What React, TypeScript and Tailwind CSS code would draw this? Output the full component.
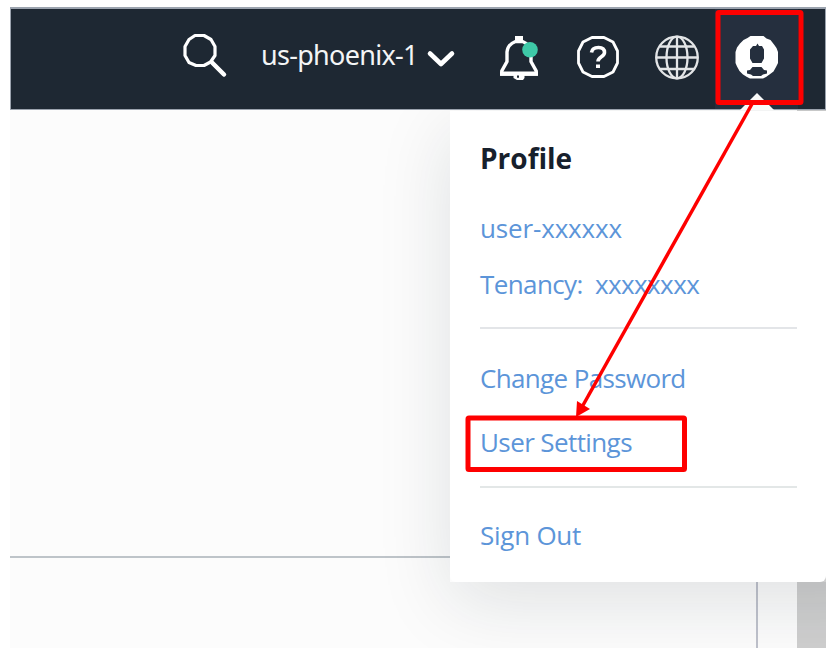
import React from 'react';

function SearchIcon() {
  return (
    <svg className="mb-[5px] ml-[171px] h-[46px] w-[46px] shrink-0" viewBox="0 0 46 46" fill="none" stroke="#fff">
      <path d="M13 3.500h9L29 7.500l4 7v9l-4.500 6.500-6.500 3.500h-8L7 30.500l-4-7v-9L7 7.500Z" strokeWidth="3.200" strokeLinejoin="round" />
      <path d="m30.500 31 11.500 11.500" strokeWidth="4.500" strokeLinecap="round" />
    </svg>
  );
}

function ChevronIcon() {
  return (
    <svg className="mt-[2px] h-[20px] w-[30px] shrink-0" viewBox="0 0 30 20" fill="none" stroke="#fff" strokeWidth="4.600" strokeLinecap="round" strokeLinejoin="round">
      <path d="m4 5.500 11 10.500L26 5.500" />
    </svg>
  );
}

function BellIcon() {
  return (
    <svg className="ml-[43px] mt-[2px] h-[46px] w-[40px] shrink-0" viewBox="0 0 40 46" fill="none">
      <path d="M16 1h8v6h-8Z" fill="#fff" />
      <path d="M16.500 6.500c-5 2-8 5-8.500 10.500v9.500L2.800 36v3h34.400v-3L32 26.500V17c-.5-5.500-3.500-8.500-8.500-10.500Z" stroke="#fff" strokeWidth="3.400" />
      <path d="M1 36.500h38v4.300H1Z" fill="#fff" />
      <path d="M14.500 40h11v3l-1.500 2h-6l-3.500-2Z" fill="#fff" />
      <path d="M18 40.500h2v2.200h-2Z" fill="#1e2833" />
      <circle cx="31" cy="14.800" r="7.800" fill="#3ec9a7" />
    </svg>
  );
}

function HelpIcon() {
  return (
    <svg className="ml-[37px] h-[44px] w-[44px] shrink-0" viewBox="0 0 44 44" fill="none" stroke="#fff">
      <path d="M16 2.500h12L37 7l4.500 9v12L37 37l-9 4.500H16L7 37l-4.500-9V16L7 7Z" strokeWidth="2.800" strokeLinejoin="round" />
      <path d="M15.500 17.500c.5-4 3-5 7-5s6 1.500 6 5c0 4.500-6.500 4-6.500 9" strokeWidth="3.600" />
      <path d="M22 29.500v3.500" strokeWidth="4" />
    </svg>
  );
}

function GlobeIcon() {
  return (
    <svg className="ml-[34px] h-[46px] w-[46px] shrink-0" viewBox="0 0 46 46" fill="none" stroke="#e3e5e7" strokeWidth="2.300">
      <circle cx="23" cy="23.500" r="20.800" />
      <ellipse cx="23" cy="23.500" rx="10.500" ry="20.800" />
      <path d="M23 3v41M2 23.500h42M6 12.500h34M6 35h34" />
    </svg>
  );
}

function AvatarIcon() {
  return (
    <svg className="h-[44px] w-[44px]" viewBox="0 0 44 44">
      <path d="M15.500 1h13l3 2.500 4 1.500 3.500 4.500 2.500 3.500 1.500 4v11l-2 4-2.500 4.500-4 3-3.500 2.500-3 1.500H15l-3-1.500-4-2.500L4.500 36 2 31.500.500 28V17L2 12.500l3-4L8.500 5l4-2Z" fill="#fff" />
      <path d="M18 11h3l1.500-2.500L24 11h3l2 3.500v9L26.500 28h-9L15 23.500v-9Z" fill="#252f3e" />
      <path d="M17.500 32h9l2.500 3 3 .5v3l-4 1-2 1.500h-8l-2-1.500-4-1v-3l3-.5Z" fill="#252f3e" />
    </svg>
  );
}

function Header() {
  return (
    <header className="flex h-[103px] items-center border border-t-2 border-[#9ba3ae] bg-[#1e2833] pb-[4px]">
      <SearchIcon />
      <span className="mb-[5px] ml-[33px] w-[165px] whitespace-nowrap font-['Noto_Sans'] text-[27px] leading-none tracking-[-0.700px] text-[#f3f5f6]">us-phoenix-1</span>
      <ChevronIcon />
      <BellIcon />
      <HelpIcon />
      <GlobeIcon />
      <div className="relative mb-[-4px] ml-[15px] flex h-[100px] w-[83px] items-center justify-center bg-[#252f3e] pb-[4px]">
        <AvatarIcon />
        <svg className="absolute bottom-[-1px] left-[25px] h-[17px] w-[34px]" viewBox="0 0 34 17">
          <path d="M0 17 17 0l17 17Z" fill="#fafafa" />
        </svg>
      </div>
    </header>
  );
}

function ProfileMenu() {
  return (
    <nav className="absolute left-[450px] top-[111px] flex h-[471px] w-[376px] flex-col rounded-b-md bg-white pl-[30px] pr-[29px] font-['Open_Sans'] text-[26px] leading-[36px] text-[#5c95d9]">
      <h2 className="mt-[29px] whitespace-nowrap text-[28px] font-bold text-[#17202c]">Profile</h2>
      <a className="mt-[34px] whitespace-nowrap tracking-[-0.150px]">user-xxxxxx</a>
      <a className="mt-[20px] whitespace-pre tracking-[-0.600px]">Tenancy:  xxxxxxxx</a>
      <hr className="mt-[25px] border-t-2 border-[#e3e5e8]" />
      <a className="mt-[31px] whitespace-nowrap tracking-[-0.650px]">Change Password</a>
      <a className="mt-[28px] whitespace-nowrap tracking-[-0.600px]">User Settings</a>
      <hr className="mt-[26px] border-t-2 border-[#e3e7e7]" />
      <a className="mt-[29px] whitespace-nowrap tracking-[-0.250px]">Sign Out</a>
    </nav>
  );
}

function Annotations() {
  return (
    <svg className="absolute left-0 top-0 h-[663px] w-[836px]" viewBox="0 0 836 663" fill="none" stroke="#fe0000">
      <rect x="718" y="12.500" width="83" height="90" rx="1" strokeWidth="5" />
      <rect x="468" y="418" width="216.500" height="51.500" rx="1" strokeWidth="5" />
      <path d="M752 104 582 407" strokeWidth="3.500" />
      <path d="m576 417 1-16 13 8Z" fill="#fe0000" stroke="none" />
    </svg>
  );
}

export default function App() {
  return (
    <div className="relative h-[663px] w-[836px] overflow-hidden bg-white px-[10px] pt-[7px]">
      <Header />
      <main className="relative flex h-[538px] overflow-hidden bg-[#fcfcfc]">
        <div className="flex flex-1 flex-col">
          <div className="h-[448px] border-b-2 border-[#bec4c9]" />
          <div className="w-[748px] flex-1 border-r-2 border-[#bfc2cc]" />
        </div>
        <div className="w-[29px] bg-[#cfcfcf]" />
        <div className="absolute left-[440px] top-[1px] h-[471px] w-[450px] shadow-[0_20px_70px_0_rgba(20,30,40,0.12)]" />
      </main>
      <ProfileMenu />
      <Annotations />
    </div>
  );
}
